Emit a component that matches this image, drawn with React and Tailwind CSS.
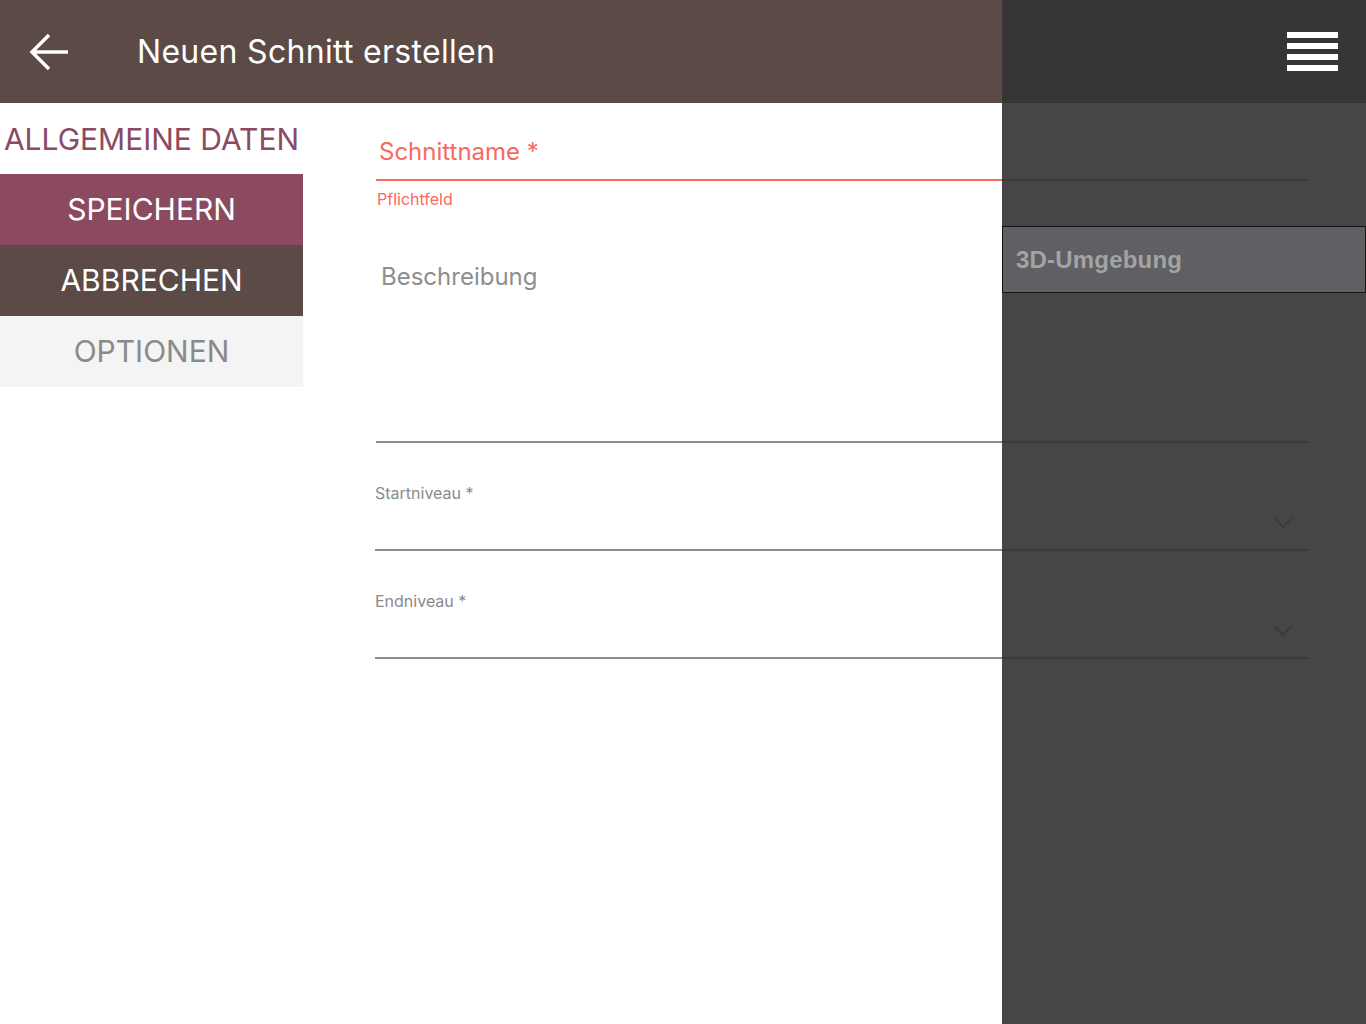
import React from "react";

function Chevron() {
  return (
    <svg width="20" height="12" viewBox="0 0 20 12" className="block">
      <path d="M1 1 L10 10 L19 1" fill="none" stroke="#8c8c8c" strokeWidth="2" />
    </svg>
  );
}

function SelectField({ label }) {
  return (
    <div className="mt-[40px] border-b-2 border-[#8c8c8c] h-[68px] relative">
      <div className="text-[16px] leading-[20px] text-[#8a8a8a]">{label}</div>
      <div className="absolute right-[16px] bottom-[20px]">
        <Chevron />
      </div>
    </div>
  );
}

export default function App() {
  return (
    <div
      className="relative w-[1366px] h-[1024px] overflow-hidden bg-white"
      style={{ fontFamily: "Inter, 'Noto Sans', sans-serif" }}
    >
      {/* Header */}
      <div className="h-[103px] bg-[#5c4a46] flex items-center">
        <div className="w-[137px] flex items-center pl-[28px]">
          <svg width="44" height="40" viewBox="0 0 44 40" className="block">
            <path
              d="M40 20 H5 M21 3 L4 20 L21 37"
              fill="none"
              stroke="white"
              strokeWidth="3.5"
            />
          </svg>
        </div>
        <div className="text-white text-[32px] leading-[40px] tracking-[0.3px] mt-[1px]">
          Neuen Schnitt erstellen
        </div>
      </div>

      {/* Body */}
      <div className="flex">
        {/* Sidebar */}
        <div className="w-[303px] shrink-0">
          <div className="pt-[18px] pb-[17px] text-center text-[30px] leading-[36px] text-[#8b4a62]">
            ALLGEMEINE DATEN
          </div>
          <div className="h-[71px] bg-[#8b4a5f] text-white text-[30px] flex items-center justify-center">
            SPEICHERN
          </div>
          <div className="h-[71px] bg-[#5c4a46] text-white text-[30px] flex items-center justify-center">
            ABBRECHEN
          </div>
          <div className="h-[71px] bg-[#f4f4f4] text-[#8a8a8a] text-[30px] flex items-center justify-center">
            OPTIONEN
          </div>
        </div>

        {/* Form */}
        <div className="ml-[72px] w-[934px]">
          <div className="mt-[33px] pb-[11px] pl-[3px] border-b-2 border-[#f7695f] ml-[1px]">
            <div className="text-[24px] leading-[32px] text-[#f7695f]">Schnittname *</div>
          </div>
          <div className="mt-[8px] pl-[2px] text-[16px] leading-[20px] text-[#f7695f]">
            Pflichtfeld
          </div>
          <div className="mt-[52px] h-[182px] border-b-2 border-[#8c8c8c] pl-[5px] ml-[1px]">
            <div className="text-[24px] leading-[32px] text-[#8e8e8e]">Beschreibung</div>
          </div>
          <SelectField label="Startniveau *" />
          <SelectField label="Endniveau *" />
        </div>
      </div>

      {/* Drawer overlay */}
      <div className="absolute top-0 bottom-0 left-[1002px] right-0 bg-[rgba(50,50,50,0.9)]">
        <div className="absolute left-[285px] top-[32px] flex flex-col gap-[5px]">
          <div className="w-[51px] h-[6px] bg-white" />
          <div className="w-[51px] h-[6px] bg-white" />
          <div className="w-[51px] h-[6px] bg-white" />
          <div className="w-[51px] h-[6px] bg-white" />
        </div>
        <div className="mt-[226px] h-[67px] bg-[#605f63] border border-[#141414] flex items-center pl-[13px]">
          <span
            className="text-[24px] font-bold text-[#a3a3a3] tracking-[0.2px]"
            style={{ fontFamily: "'Liberation Sans', Arial, sans-serif" }}
          >
            3D-Umgebung
          </span>
        </div>
      </div>
    </div>
  );
}
